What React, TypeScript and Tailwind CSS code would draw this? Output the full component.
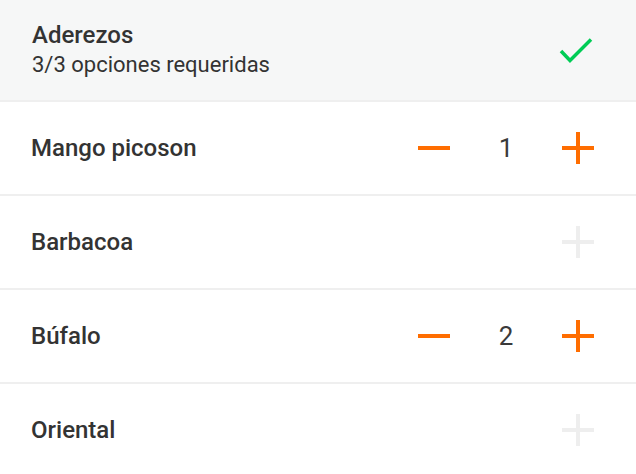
import React from 'react';

type Option = { name: string; qty: number };

const options: Option[] = [
  { name: 'Mango picoson', qty: 1 },
  { name: 'Barbacoa', qty: 0 },
  { name: 'Búfalo', qty: 2 },
  { name: 'Oriental', qty: 0 },
];

const MinusIcon = () => (
  <svg width="32" height="32" viewBox="0 0 32 32">
    <rect x="0" y="14" width="32" height="4" fill="#ff6d00" />
  </svg>
);

const PlusIcon = ({ disabled }: { disabled?: boolean }) => (
  <svg width="32" height="32" viewBox="0 0 32 32">
    <rect x="0" y="14" width="32" height="4" fill={disabled ? '#eeeeee' : '#ff6d00'} />
    <rect x="14" y="0" width="4" height="32" fill={disabled ? '#eeeeee' : '#ff6d00'} />
  </svg>
);

const CheckIcon = () => (
  <svg width="34" height="26" viewBox="0 0 34 26">
    <polyline
      points="2,14 11,23.5 32,2.5"
      fill="none"
      stroke="#00cc55"
      strokeWidth="3.5"
    />
  </svg>
);

const OptionRow: React.FC<{ option: Option }> = ({ option }) => (
  <div className="flex h-[94px] items-center justify-between border-b-2 border-[#efefef] pl-[31px] pr-[42px]">
    <span className="text-[24px] font-medium text-[#333333]">{option.name}</span>
    <div className="flex items-center">
      {option.qty > 0 && (
        <>
          <MinusIcon />
          <span className="w-[112px] text-center text-[26px] text-[#3a3a3a]">{option.qty}</span>
        </>
      )}
      <PlusIcon disabled={option.qty === 0} />
    </div>
  </div>
);

export default function App() {
  return (
    <div className="h-[474px] w-[636px] overflow-hidden bg-white" style={{ fontFamily: 'Roboto, sans-serif' }}>
      <div className="flex h-[102px] items-center justify-between border-b-2 border-[#efefef] bg-[#f6f7f7] pl-[32px] pr-[43px]">
        <div className="flex flex-col">
          <span className="text-[24px] leading-[30px] font-medium text-[#333333]">Aderezos</span>
          <span className="text-[22px] leading-[30px] text-[#333333]">3/3 opciones requeridas</span>
        </div>
        <CheckIcon />
      </div>
      {options.map((o) => (
        <OptionRow key={o.name} option={o} />
      ))}
    </div>
  );
}
